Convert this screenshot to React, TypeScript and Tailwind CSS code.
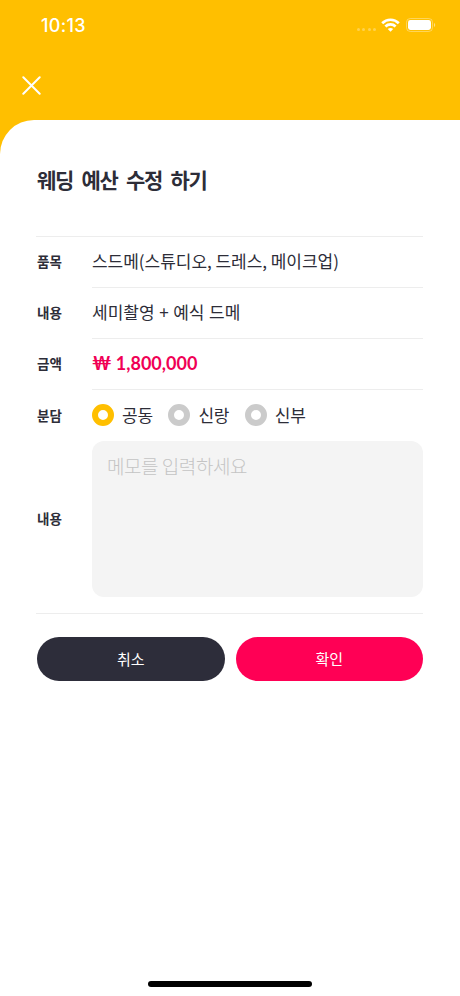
import type { ReactNode } from 'react'

const shares = [
  { id: 'both', label: '공동', checked: true },
  { id: 'groom', label: '신랑', checked: false },
  { id: 'bride', label: '신부', checked: false },
]

function StatusBar() {
  return (
    <div className="flex h-[50px] items-center justify-between pl-[41px] pr-6 text-white">
      <span className="pt-0.5 font-['Inter'] text-[18px] font-medium leading-none tracking-[0.3px]">10:13</span>
      <div className="flex h-4 items-center">
        <div className="mr-[5px] mt-2 flex gap-[2.4px]">
          <span className="size-[3px] rounded-full bg-white/30" />
          <span className="size-[3px] rounded-full bg-white/30" />
          <span className="size-[3px] rounded-full bg-white/30" />
          <span className="size-[3px] rounded-full bg-white/30" />
        </div>
        <svg width="19" height="14" viewBox="0 0 19 14" fill="none" stroke="currentColor" strokeWidth="2.7">
          <path d="M1.2 5.2C5.8.6 13.2.6 17.8 5.2" />
          <path d="M4.4 8.5c2.8-2.8 7.4-2.8 10.2 0" />
          <path d="M9.5 13.8 6.8 11.1c1.4-1.5 4-1.5 5.4 0z" fill="currentColor" stroke="none" />
        </svg>
        <svg className="ml-[6px]" width="30" height="14" viewBox="0 0 30 14" fill="none">
          <rect x="0.5" y="0.5" width="26" height="13" rx="3.8" stroke="white" strokeOpacity="0.35" />
          <rect x="2" y="2" width="23" height="10" rx="2.4" fill="white" />
          <path d="M28 5v4c1.6-.6 1.6-3.4 0-4z" fill="white" fillOpacity="0.5" />
        </svg>
      </div>
    </div>
  )
}

function Row({ label, children }: { label: string; children: ReactNode }) {
  return (
    <div className="flex h-[51px] items-stretch">
      <span className="flex w-14 shrink-0 items-center pb-0.5 pl-px text-[13.5px] font-bold leading-none">{label}</span>
      <div className="flex flex-1 items-center border-b border-[#ededed] pb-[3px] text-[17px] leading-none">{children}</div>
    </div>
  )
}

export default function App() {
  return (
    <div className="flex h-[996px] w-[460px] flex-col overflow-hidden bg-[#ffbf00] font-['Noto_Sans_CJK_KR',sans-serif] text-[#2d2d38]">
      <StatusBar />
      <header className="flex h-[70px] items-center pl-[22px]">
        <button aria-label="닫기" className="text-white">
          <svg width="19" height="19" viewBox="0 0 19 19" fill="none" stroke="currentColor" strokeWidth="2" strokeLinecap="round">
            <path d="M1.3 1.3l16.4 16.4M17.7 1.3 1.3 17.7" />
          </svg>
        </button>
      </header>

      <main className="flex flex-1 flex-col rounded-tl-[34px] bg-white pl-9 pr-[37px]">
        <h1 className="flex h-[116px] items-center pl-px pt-0.5 text-[21px] font-bold leading-none tracking-[-1.3px] [word-spacing:5px]">
          웨딩 예산 수정 하기
        </h1>

        <section className="border-y border-[#ededed]">
          <Row label="품목">
            <span className="tracking-[-0.03px]">스드메(스튜디오, 드레스, 메이크업)</span>
          </Row>
          <Row label="내용">
            <span className="[word-spacing:0.8px]">세미촬영 + 예식 드메</span>
          </Row>
          <Row label="금액">
            <span className="pt-px font-['Lato','Noto_Sans_CJK_KR',sans-serif] text-[18px] font-bold text-[#f00055]">₩ 1,800,000</span>
          </Row>

          <div className="flex h-[51px] items-center">
            <span className="w-14 shrink-0 pl-px text-[13.5px] font-bold leading-none">분담</span>
            <div className="flex gap-[15.5px] pb-px">
              {shares.map((share) => (
                <label key={share.id} className="flex items-center gap-2 text-[17px] leading-none tracking-[-0.2px]">
                  <span
                    className={`size-[22px] rounded-full border-[6px] bg-white ${
                      share.checked ? 'border-[#ffbf00]' : 'border-[#cbcbcb]'
                    }`}
                  />
                  <span className="pb-px">{share.label}</span>
                </label>
              ))}
            </div>
          </div>

          <div className="flex h-[172px] items-start">
            <span className="flex h-[156px] w-14 shrink-0 items-center pl-px text-[13.5px] font-bold leading-none">내용</span>
            <textarea
              className="h-[156px] flex-1 resize-none rounded-[12px] bg-[#f4f4f4] px-[15px] py-3 text-[19px] font-light leading-[26px] tracking-[-0.45px] outline-none placeholder:text-[#c4c4c4]"
              placeholder="메모를 입력하세요"
            />
          </div>
        </section>

        <div className="mt-[23px] flex gap-[11px] pl-px text-[15px] leading-none text-white">
          <button className="h-[44px] flex-1 rounded-full bg-[#2d2d3a] pb-0.5">취소</button>
          <button className="h-[44px] flex-1 rounded-full bg-[#ff0055] pb-0.5">확인</button>
        </div>

        <div className="mb-[9px] ml-[112px] mt-auto h-[6px] w-[164px] rounded-full bg-black" />
      </main>
    </div>
  )
}
